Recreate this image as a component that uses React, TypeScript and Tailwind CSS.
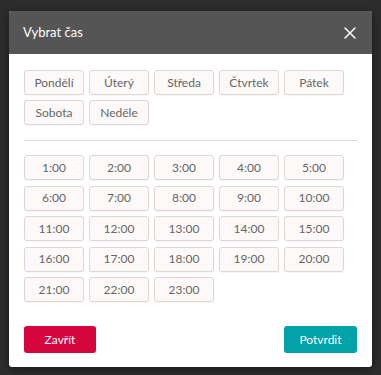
import React, { useState } from 'react';

const days = ['Pondělí', 'Úterý', 'Středa', 'Čtvrtek', 'Pátek', 'Sobota', 'Neděle'];
const hours = Array.from({ length: 23 }, (_, i) => `${i + 1}:00`);

const pickClass =
  'w-[60px] h-[25px] flex items-center justify-center rounded-[3px] border border-[#ddd6d3] bg-[#fcf9f8] text-[12px] text-[#666] shadow-[0_1px_1px_rgba(0,0,0,0.04)]';

const App: React.FC = () => {
  const [open] = useState(true);

  return (
    <div
      className="w-[381px] h-[375px] overflow-hidden bg-[#2d2d2d] pt-[11px] pl-[9px]"
      style={{ fontFamily: 'Lato, "Open Sans", sans-serif' }}
    >
      {open && (
        <div className="w-[363px] h-[356px] bg-white rounded-[3px] overflow-hidden flex flex-col shadow-[0_2px_8px_rgba(0,0,0,0.5)]">
          {/* Header */}
          <div className="h-[43px] bg-[#555555] flex items-center justify-between pl-[14px] pr-[16px] flex-shrink-0">
            <span className="text-[13px] text-white">Vybrat čas</span>
            <svg width="12" height="12" viewBox="0 0 12 12" aria-hidden="true">
              <path d="M1 1 L11 11 M11 1 L1 11" stroke="#fff" strokeWidth="1.5" strokeLinecap="round" />
            </svg>
          </div>

          {/* Body */}
          <div className="flex-1 flex flex-col px-[15px] pt-[16px] pb-[14px]">
            <div className="flex flex-wrap gap-[5px]">
              {days.map((d) => (
                <button key={d} type="button" className={pickClass}>
                  {d}
                </button>
              ))}
            </div>

            <div className="h-px bg-[#ddd8d5] mt-[15px] mb-[14px]" />

            <div className="flex flex-wrap gap-x-[5px] gap-y-[5.5px]">
              {hours.map((h) => (
                <button key={h} type="button" className={pickClass}>
                  {h}
                </button>
              ))}
            </div>

            <div className="mt-auto flex justify-between">
              <button
                type="button"
                className="w-[72px] h-[27px] rounded-[3px] bg-[#d6053c] text-white text-[12px] flex items-center justify-center"
              >
                Zavřít
              </button>
              <button
                type="button"
                className="w-[73px] h-[27px] rounded-[3px] bg-[#02a2a8] text-white text-[12px] flex items-center justify-center"
              >
                Potvrdit
              </button>
            </div>
          </div>
        </div>
      )}
    </div>
  );
};

export default App;
